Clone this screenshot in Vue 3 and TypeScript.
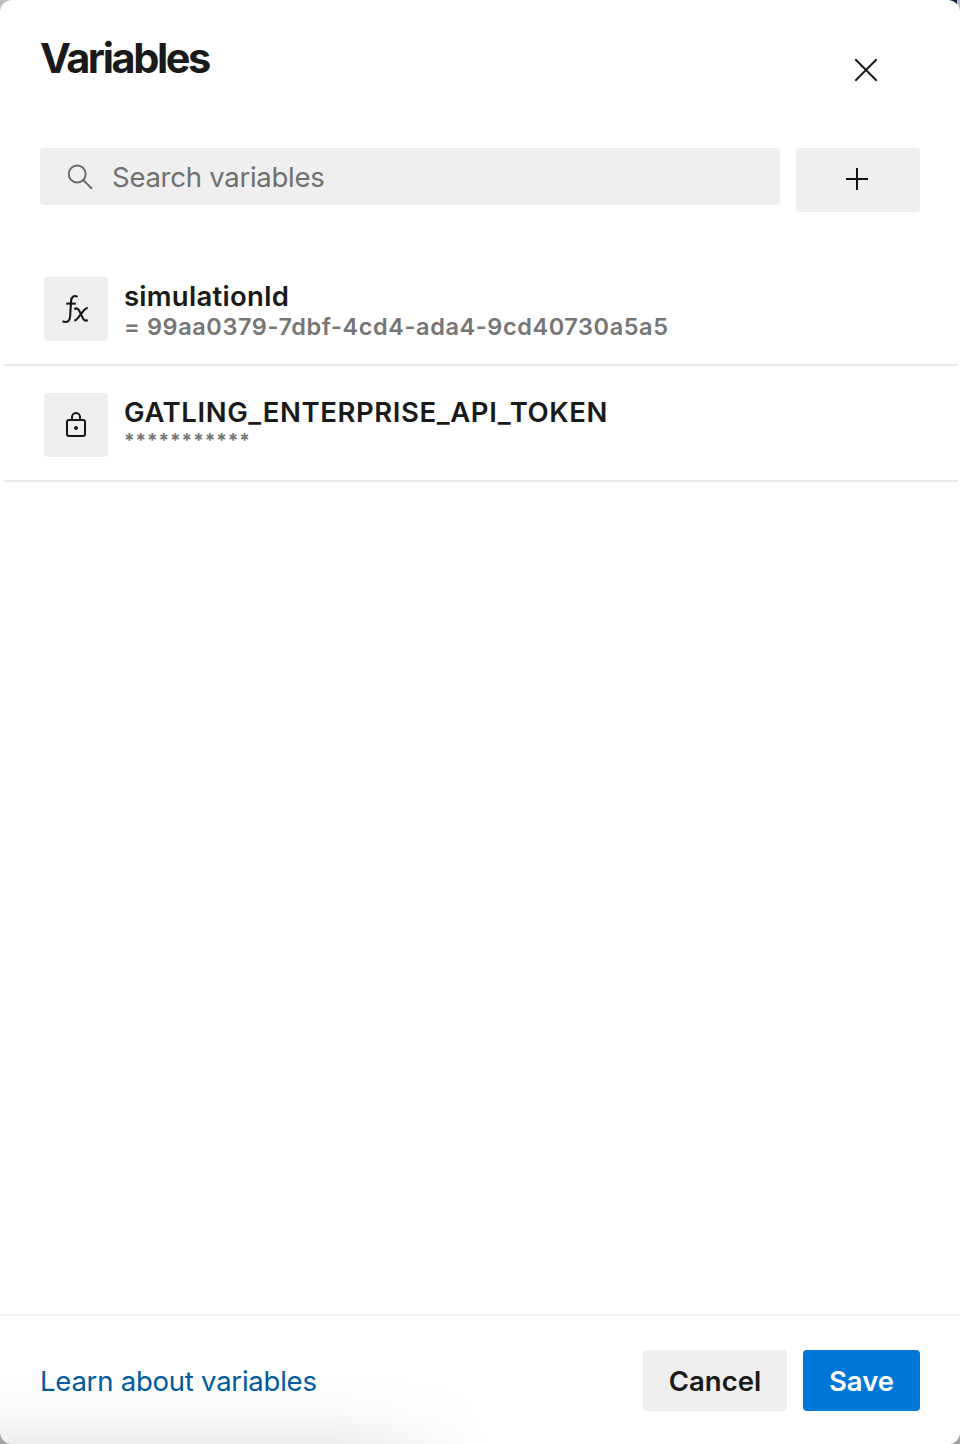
<script setup lang="ts">
import { ref, computed } from 'vue'

interface Variable {
  name: string
  value: string
  secret: boolean
}

const query = ref('')
const variables: Variable[] = [
  { name: 'simulationId', value: '= 99aa0379-7dbf-4cd4-ada4-9cd40730a5a5', secret: false },
  { name: 'GATLING_ENTERPRISE_API_TOKEN', value: '***********', secret: true },
]
const visible = computed(() =>
  variables.filter((v) => v.name.toLowerCase().includes(query.value.toLowerCase())),
)
</script>

<template>
  <div class="backdrop">
    <section class="panel">
      <header class="header">
        <h1 class="title">Variables</h1>
        <button class="close" aria-label="Close">
          <svg width="24" height="24" viewBox="0 0 24 24" fill="none" stroke="#1b1a19" stroke-width="2">
            <path d="M1.3 1.3 22.7 22.7M22.7 1.3 1.3 22.7" />
          </svg>
        </button>
      </header>

      <div class="toolbar">
        <label class="search">
          <svg width="26" height="26" viewBox="0 0 26 26" fill="none" stroke="#6b6b6b" stroke-width="1.9">
            <circle cx="10.2" cy="10" r="8.5" />
            <path d="M16.2 16 25 24.7" />
          </svg>
          <input v-model="query" class="field" type="text" placeholder="Search variables" />
        </label>
        <button class="add" aria-label="Add variable">
          <svg width="22" height="22" viewBox="0 0 22 22" fill="none" stroke="#111" stroke-width="2">
            <path d="M11 0V22M0 11H22" />
          </svg>
        </button>
      </div>

      <ul class="list">
        <li v-for="v in visible" :key="v.name" class="row">
          <span class="tile">
            <svg v-if="v.secret" width="64" height="64" viewBox="0 0 64 64" fill="none" stroke="#161616" stroke-width="2">
              <rect x="23" y="27" width="18" height="16" rx="2" />
              <path d="M28 27V24.3a4 4.3 0 0 1 8 0V27" />
              <circle cx="32" cy="35" r="2" fill="#161616" stroke="none" />
            </svg>
            <svg v-else width="64" height="64" viewBox="0 0 64 64" fill="none" stroke="#161616" stroke-width="2.1">
              <path d="M33.5 19.9C30.2 17.9 27.5 19.5 27.1 24L26.1 39.5C25.8 44.3 23.3 46.2 18.5 44.3" />
              <path d="M22.3 26.6H31.8" />
              <path d="M30.3 32.3C32.3 30.8 33.8 31.1 35 33.3L39 41.4C40.1 43.6 41.7 44.2 43.7 43" />
              <path d="M43.8 31C42.4 30.9 41.2 31.7 40 33.2L33.8 41.1C32.6 42.7 31.6 43.6 30.2 43.5" />
            </svg>
          </span>
          <span class="info">
            <span class="name" :class="{ upper: v.secret }">{{ v.name }}</span>
            <span class="value" :class="{ masked: v.secret }">{{ v.value }}</span>
          </span>
        </li>
      </ul>

      <footer class="footer">
        <a class="learn">Learn about variables</a>
        <div class="actions">
          <button class="btn cancel">Cancel</button>
          <button class="btn save">Save</button>
        </div>
      </footer>
    </section>
  </div>
</template>

<style>
body {
  margin: 0;
}
</style>

<style scoped>
.backdrop {
  height: 1444px;
  background:
    linear-gradient(#0c1c4a, #0c1c4a) calc(100% - 3px) 0 / 9px 4px no-repeat,
    linear-gradient(#bdbdbd, #a3a3a3);
  font-family: Inter, 'Liberation Sans', sans-serif;
  color: #1a1a1a;
}
.panel {
  box-sizing: border-box;
  height: 100%;
  display: flex;
  flex-direction: column;
  background: #fff;
  border-radius: 12px;
  overflow: hidden;
}
button {
  border: 0;
  padding: 0;
  font: inherit;
  color: inherit;
}
.header {
  height: 148px;
  box-sizing: border-box;
  padding: 34px 62px 0 40px;
  display: flex;
  justify-content: space-between;
  align-items: flex-start;
}
.title {
  margin: 0;
  font-size: 41.5px;
  line-height: 48px;
  font-weight: 700;
  letter-spacing: -2.4px;
}
.close {
  width: 64px;
  height: 64px;
  margin-top: 4px;
  display: grid;
  place-items: center;
  background: none;
}
.toolbar {
  padding: 0 40px;
  display: flex;
  align-items: flex-start;
  gap: 16px;
}
.search {
  flex: 1;
  height: 57px;
  box-sizing: border-box;
  padding: 0 27px;
  display: flex;
  align-items: center;
  gap: 19px;
  background: #efefef;
  border-radius: 4px;
}
.field {
  flex: 1;
  min-width: 0;
  height: 57px;
  padding: 0;
  border: 0;
  outline: 0;
  background: none;
  font: 400 27.5px Inter, 'Liberation Sans', sans-serif;
  letter-spacing: -0.26px;
}
.field::placeholder {
  color: #707070;
  opacity: 1;
}
.add {
  width: 124px;
  height: 64px;
  padding-right: 2px;
  padding-bottom: 2px;
  display: grid;
  place-items: center;
  background: #efefef;
  border-radius: 4px;
}
.list {
  flex: 1;
  list-style: none;
  margin: 38px 2px 0 4px;
  padding: 0;
}
.row {
  height: 116px;
  box-sizing: border-box;
  padding: 27px 40px 0;
  display: flex;
  gap: 16px;
  border-bottom: 2px solid #eaeaea;
}
.tile {
  width: 64px;
  height: 64px;
  background: #eee;
  border-radius: 4px;
}
.tile svg {
  display: block;
}
.info {
  display: flex;
  flex-direction: column;
  white-space: nowrap;
}
.name {
  margin-top: 1px;
  font-size: 27.5px;
  line-height: 36px;
  font-weight: 600;
  letter-spacing: 0.26px;
}
.name.upper {
  letter-spacing: 0.59px;
}
.value {
  font-size: 23.5px;
  line-height: 26px;
  font-weight: 600;
  letter-spacing: 0.59px;
  color: #767676;
}
.value.masked {
  font-size: 19px;
  line-height: 21px;
  font-weight: 700;
  letter-spacing: 0.9px;
}
.footer {
  height: 130px;
  box-sizing: border-box;
  padding: 34px 40px 0;
  display: flex;
  justify-content: space-between;
  align-items: flex-start;
  border-top: 2px solid #f3f3f3;
  background:
    linear-gradient(90deg, transparent 330px, #fff 490px),
    linear-gradient(transparent 45%, rgba(0, 0, 0, 0.018) 75%, rgba(0, 0, 0, 0.065));
}
.learn {
  font-size: 27.5px;
  line-height: 63px;
  letter-spacing: -0.23px;
  color: #005a9e;
}
.actions {
  display: flex;
  gap: 16px;
}
.btn {
  height: 61px;
  padding-top: 2px;
  font-size: 27.5px;
  line-height: 59px;
  font-weight: 600;
  border-radius: 4px;
}
.cancel {
  width: 144px;
  background: #efefef;
}
.save {
  width: 117px;
  background: #0078d7;
  color: #fff;
}
</style>
